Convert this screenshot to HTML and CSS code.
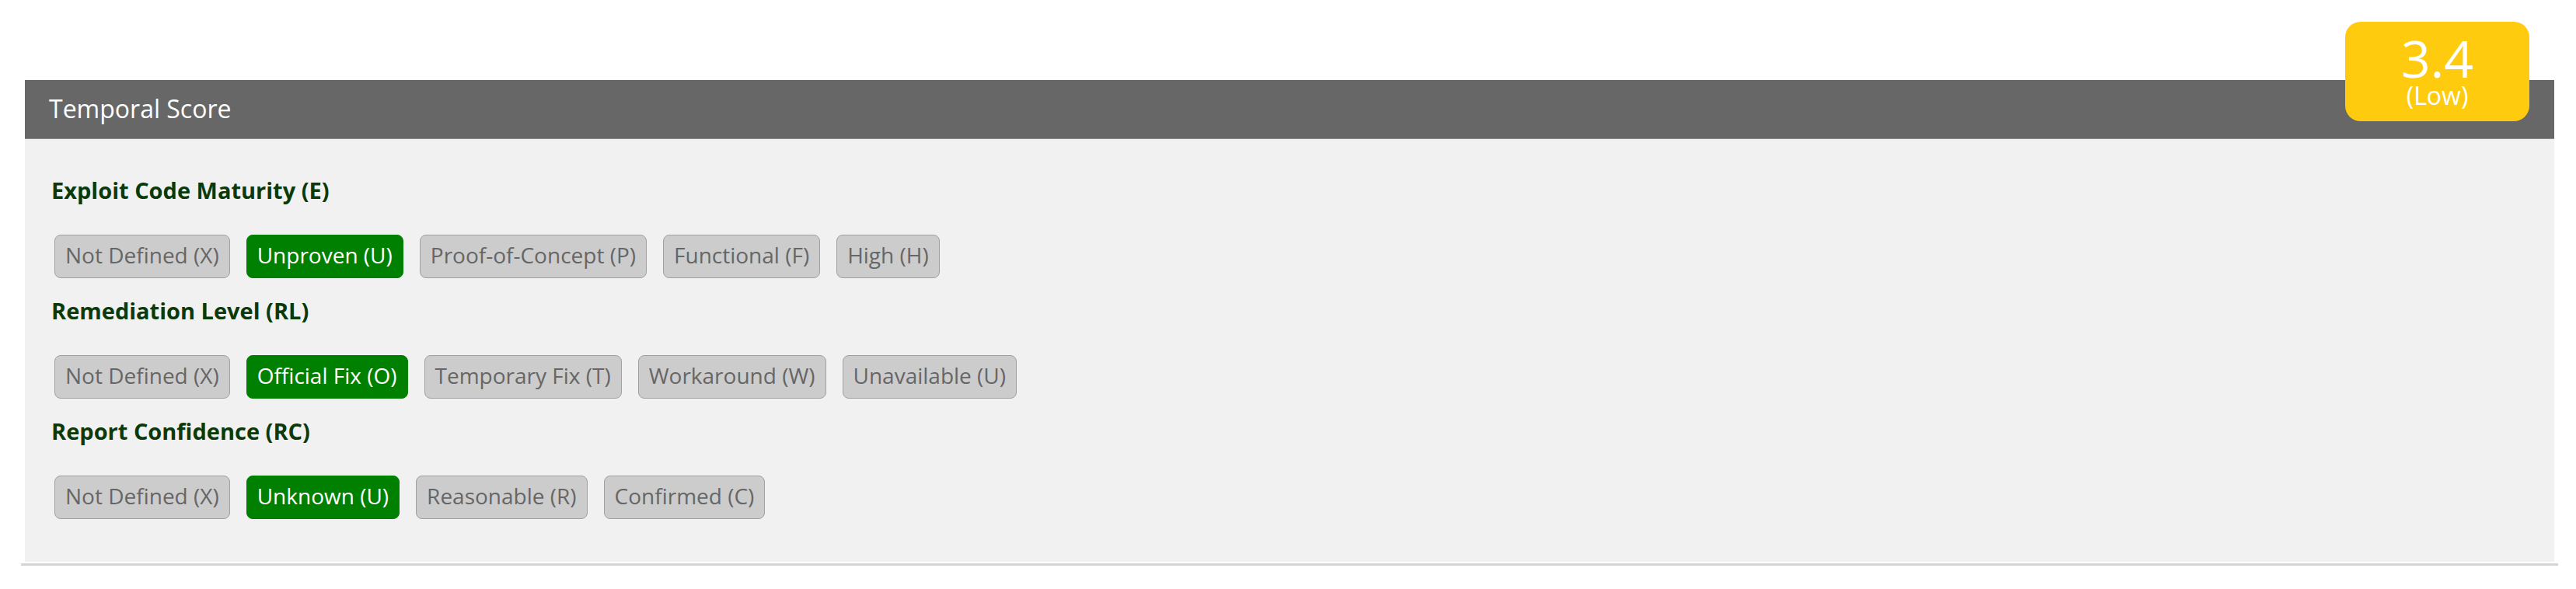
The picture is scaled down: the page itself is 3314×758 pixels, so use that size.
FILE: index.html
```html
<!DOCTYPE html>
<html lang="en">
<head>
<meta charset="utf-8">
<title>Temporal Score</title>
<link rel="stylesheet" href="styles.css">
</head>
<body>
<div class="wrap">
  <div class="badge">
    <div class="badge-score">3.4</div>
    <div class="badge-sev">(Low)</div>
  </div>
  <div class="panel">
    <div class="panel-head">Temporal Score</div>
    <div class="panel-body">
      <div class="metric">
        <div class="metric-label">Exploit Code Maturity (E)</div>
        <div class="btns">
          <span class="btn">Not Defined (X)</span>
          <span class="btn active">Unproven (U)</span>
          <span class="btn">Proof-of-Concept (P)</span>
          <span class="btn">Functional (F)</span>
          <span class="btn">High (H)</span>
        </div>
      </div>
      <div class="metric">
        <div class="metric-label">Remediation Level (RL)</div>
        <div class="btns">
          <span class="btn">Not Defined (X)</span>
          <span class="btn active">Official Fix (O)</span>
          <span class="btn">Temporary Fix (T)</span>
          <span class="btn">Workaround (W)</span>
          <span class="btn">Unavailable (U)</span>
        </div>
      </div>
      <div class="metric">
        <div class="metric-label">Report Confidence (RC)</div>
        <div class="btns">
          <span class="btn">Not Defined (X)</span>
          <span class="btn active">Unknown (U)</span>
          <span class="btn">Reasonable (R)</span>
          <span class="btn">Confirmed (C)</span>
        </div>
      </div>
    </div>
  </div>
</div>
</body>
</html>
```
FILE: styles.css
```css
html, body {
  margin: 0;
  padding: 0;
  background: #ffffff;
}

body {
  font-family: "Open Sans", "DejaVu Sans", sans-serif;
  color: #333;
}

.wrap {
  position: relative;
  box-sizing: border-box;
  width: 3264px;
  margin: 103px 0 0 27px;
  padding: 0 5px 2px;
  border-bottom: 3px solid #d5d5d5;
}

.panel {
  background: #f1f1f1;
}

.panel-head {
  background: #676767;
  color: #ffffff;
  font-size: 32px;
  line-height: 48px;
  padding: 13px 31px 14px;
  border-bottom: 1px solid #8c8c8c;
}

.panel-body {
  padding: 46px 34px 55px;
}

.metric + .metric {
  margin-top: 22px;
}

.metric-label {
  font-size: 29px;
  line-height: 40px;
  font-weight: 700;
  color: #0a3a0a;
  margin-bottom: 37px;
}

.btns {
  display: flex;
  gap: 21px;
  margin-left: 4px;
}

.btn {
  display: block;
  font-size: 28px;
  line-height: 42px;
  padding: 4px 13px 8px;
  border: 1px solid #a0a0a0;
  border-radius: 8px;
  background: #cccccc;
  color: #666666;
  white-space: nowrap;
}

.btn.active {
  background: #008000;
  border-color: #008000;
  color: #ffffff;
}

.badge {
  position: absolute;
  top: -75px;
  right: 37px;
  box-sizing: border-box;
  width: 237px;
  height: 128px;
  padding-top: 13px;
  border-radius: 20px;
  background: #fecb0f;
  color: #ffffff;
  text-align: center;
  z-index: 2;
}

.badge-score {
  font-size: 66px;
  line-height: 66px;
}

.badge-sev {
  font-size: 32px;
  line-height: 32px;
}
```
